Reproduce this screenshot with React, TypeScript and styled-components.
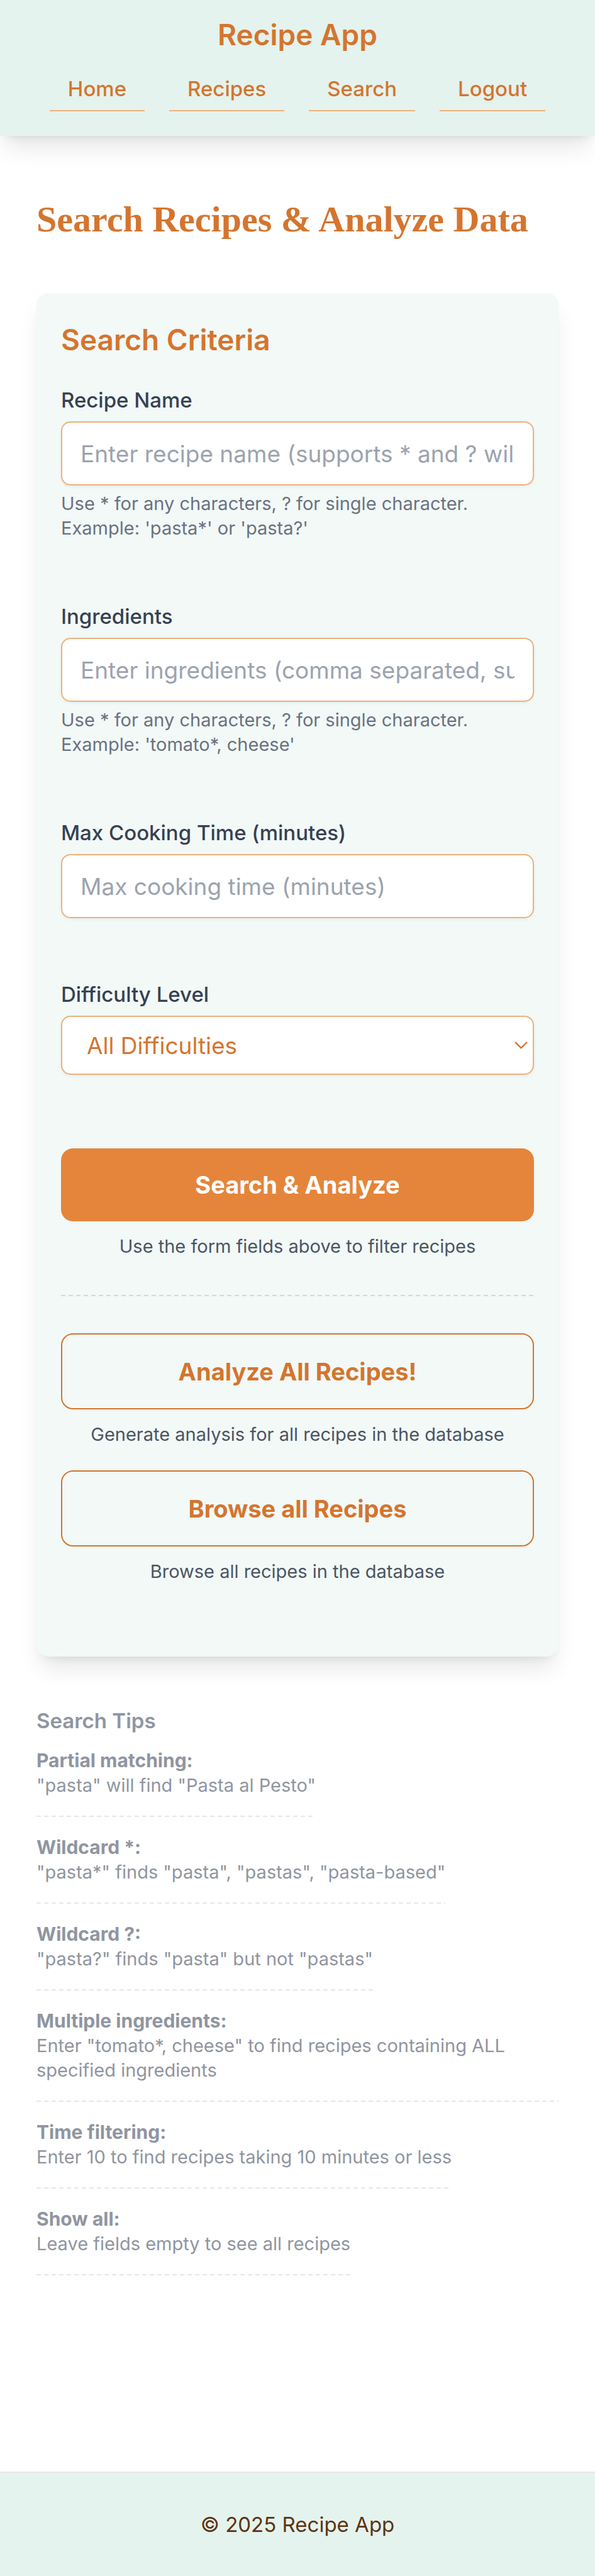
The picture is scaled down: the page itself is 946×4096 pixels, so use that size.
import React from 'react';
import styled, { createGlobalStyle, css } from 'styled-components';

const color = {
  accent: '#d4752f',
  accentFill: '#e4853b',
  accentLine: '#edb17c',
  mint: '#e4f3ed',
  mintSoft: '#f2f9f7',
  mintLine: '#c0e2d6',
  label: '#374151',
  caption: '#4b5563',
  helper: '#6b7280',
  placeholder: '#9ca3af',
  muted: '#9095a0',
  line: '#e5e7eb',
  footer: '#5c3413',
};

const sans = `Inter, 'Liberation Sans', sans-serif`;
const lifted = '0 24px 36px -7px rgba(0, 0, 0, 0.1), 0 10px 15px -10px rgba(0, 0, 0, 0.1)';

const dashed = (tone: string) => css`
  background: repeating-linear-gradient(to right, ${tone} 0 7px, transparent 7px 12px) left bottom / 100% 2px no-repeat;
`;

const GlobalStyle = createGlobalStyle`
  *, *::before, *::after { box-sizing: border-box; }
  body {
    margin: 0;
    background: #fff;
    font-family: ${sans};
    -webkit-font-smoothing: antialiased;
  }
  h1, h2, h3, p, ul { margin: 0; padding: 0; }
  input, select, button { font-family: inherit; margin: 0; }
`;

const Page = styled.div`
  min-height: 100vh;
  display: flex;
  flex-direction: column;
`;

const Header = styled.header`
  display: flex;
  flex-direction: column;
  align-items: center;
  gap: 17px;
  padding: 20px 39px 39px;
  background: ${color.mint};
  box-shadow: ${lifted};
`;

const Brand = styled.a`
  font-size: 46px;
  font-weight: 600;
  line-height: 70px;
  color: ${color.accent};
  text-decoration: none;
`;

const Nav = styled.nav`
  display: flex;
  justify-content: center;
  gap: 39px;
`;

const NavLink = styled.a`
  padding: 10px 29px;
  border-bottom: 2px solid ${color.accentLine};
  font-size: 33px;
  font-weight: 500;
  line-height: 48px;
  color: ${color.accent};
  text-decoration: none;
`;

const Main = styled.main`
  flex: 1;
  padding: 94px 58px 117px;
`;

const PageTitle = styled.h1`
  margin-bottom: 78px;
  font-family: 'Liberation Serif', 'Times New Roman', serif;
  font-size: 58px;
  font-weight: 700;
  line-height: 78px;
  color: ${color.accent};
`;

const Card = styled.section`
  padding: 39px 39px 116px;
  border-radius: 19px;
  background: ${color.mintSoft};
  box-shadow: ${lifted};
`;

const CardTitle = styled.h2`
  margin-bottom: 37px;
  font-size: 46px;
  font-weight: 600;
  line-height: 70px;
  color: ${color.accent};
`;

const Fields = styled.div`
  display: flex;
  flex-direction: column;
  gap: 97px;
  margin-bottom: 117px;
`;

const Field = styled.div`
  display: flex;
  flex-direction: column;
`;

const Label = styled.label`
  margin-bottom: 10px;
  font-size: 33px;
  font-weight: 500;
  line-height: 48px;
  color: ${color.label};
`;

const control = css`
  width: 100%;
  border: 2px solid ${color.accentLine};
  border-radius: 15px;
  background: #fff;
  box-shadow: 0 2px 5px rgba(0, 0, 0, 0.05);
  font-size: 37px;
  appearance: none;
  outline: none;
`;

const TextInput = styled.input`
  ${control}
  height: 102px;
  padding: 0 29px;
  color: ${color.label};

  &::placeholder {
    color: ${color.placeholder};
    opacity: 1;
  }
  &::-webkit-inner-spin-button,
  &::-webkit-outer-spin-button {
    appearance: none;
    margin: 0;
  }
`;

const SelectBox = styled.div`
  position: relative;
`;

const Select = styled.select`
  ${control}
  display: block;
  height: 94px;
  padding: 0 39px;
  color: ${color.accent};
`;

const Chevron = styled.svg`
  position: absolute;
  top: 50%;
  right: 10px;
  width: 21px;
  height: 12px;
  margin-top: -6px;
  pointer-events: none;
`;

const Helper = styled.p`
  margin-top: 9px;
  font-size: 29px;
  line-height: 39px;
  color: ${color.helper};
`;

const Action = styled.div`
  display: flex;
  flex-direction: column;
  gap: 20px;
`;

const Actions = styled.div`
  display: flex;
  flex-direction: column;
  gap: 38px;
`;

const Button = styled.button<{ $outline?: boolean }>`
  height: ${(p) => (p.$outline ? 121 : 116)}px;
  border: ${(p) => (p.$outline ? `2px solid ${color.accent}` : '0')};
  border-radius: 19px;
  background: ${(p) => (p.$outline ? 'transparent' : color.accentFill)};
  color: ${(p) => (p.$outline ? color.accent : '#fff')};
  font-size: 38px;
  font-weight: 700;
  cursor: pointer;
`;

const Caption = styled.p`
  font-size: 29px;
  line-height: 39px;
  text-align: center;
  color: ${color.caption};
`;

const Divider = styled.hr`
  ${dashed(color.mintLine)}
  height: 2px;
  margin: 58px 0 59px;
  border: 0;
`;

const Tips = styled.section`
  margin-top: 78px;
  color: ${color.muted};
`;

const TipsTitle = styled.h3`
  margin-bottom: 20px;
  font-size: 33px;
  font-weight: 600;
  line-height: 48px;
`;

const TipList = styled.ul`
  display: flex;
  flex-direction: column;
  align-items: flex-start;
  gap: 29px;
  list-style: none;
`;

const Tip = styled.li`
  ${dashed(color.line)}
  max-width: 100%;
  padding-bottom: 31px;
  font-size: 29px;
  line-height: 39px;
`;

const TipName = styled.strong`
  display: block;
  font-size: 30px;
  font-weight: 700;
`;

const Footer = styled.footer`
  padding: 58px;
  border-top: 2px solid ${color.line};
  background: ${color.mint};
  font-size: 33px;
  line-height: 48px;
  text-align: center;
  color: ${color.footer};
`;

const links = ['Home', 'Recipes', 'Search', 'Logout'];

const tips = [
  { name: 'Partial matching:', text: '"pasta" will find "Pasta al Pesto"' },
  { name: 'Wildcard *:', text: '"pasta*" finds "pasta", "pastas", "pasta-based"' },
  { name: 'Wildcard ?:', text: '"pasta?" finds "pasta" but not "pastas"' },
  { name: 'Multiple ingredients:', text: 'Enter "tomato*, cheese" to find recipes containing ALL specified ingredients' },
  { name: 'Time filtering:', text: 'Enter 10 to find recipes taking 10 minutes or less' },
  { name: 'Show all:', text: 'Leave fields empty to see all recipes' },
];

export default function App() {
  return (
    <Page>
      <GlobalStyle />
      <Header>
        <Brand href="#">Recipe App</Brand>
        <Nav>
          {links.map((name) => (
            <NavLink key={name} href={`#${name.toLowerCase()}`}>
              {name}
            </NavLink>
          ))}
        </Nav>
      </Header>

      <Main>
        <PageTitle>Search Recipes &amp; Analyze Data</PageTitle>

        <Card>
          <CardTitle>Search Criteria</CardTitle>
          <form onSubmit={(e) => e.preventDefault()}>
            <Fields>
              <Field>
                <Label htmlFor="name">Recipe Name</Label>
                <TextInput id="name" type="text" placeholder="Enter recipe name (supports * and ? wildcards)" />
                <Helper>Use * for any characters, ? for single character. Example: 'pasta*' or 'pasta?'</Helper>
              </Field>
              <Field>
                <Label htmlFor="ingredients">Ingredients</Label>
                <TextInput
                  id="ingredients"
                  type="text"
                  placeholder="Enter ingredients (comma separated, supports * and ? wildcards)"
                />
                <Helper>Use * for any characters, ? for single character. Example: 'tomato*, cheese'</Helper>
              </Field>
              <Field>
                <Label htmlFor="time">Max Cooking Time (minutes)</Label>
                <TextInput id="time" type="number" placeholder="Max cooking time (minutes)" />
              </Field>
              <Field>
                <Label htmlFor="difficulty">Difficulty Level</Label>
                <SelectBox>
                  <Select id="difficulty" defaultValue="">
                    <option value="">All Difficulties</option>
                    <option value="easy">Easy</option>
                    <option value="medium">Medium</option>
                    <option value="hard">Hard</option>
                  </Select>
                  <Chevron viewBox="0 0 21 12" fill="none" aria-hidden="true">
                    <path d="M1 1L10.5 10.3L20 1" stroke={color.accent} strokeWidth="2.4" />
                  </Chevron>
                </SelectBox>
              </Field>
            </Fields>

            <Action>
              <Button type="submit">Search &amp; Analyze</Button>
              <Caption>Use the form fields above to filter recipes</Caption>
            </Action>
            <Divider />
            <Actions>
              <Action>
                <Button type="button" $outline>
                  Analyze All Recipes!
                </Button>
                <Caption>Generate analysis for all recipes in the database</Caption>
              </Action>
              <Action>
                <Button type="button" $outline>
                  Browse all Recipes
                </Button>
                <Caption>Browse all recipes in the database</Caption>
              </Action>
            </Actions>
          </form>
        </Card>

        <Tips>
          <TipsTitle>Search Tips</TipsTitle>
          <TipList>
            {tips.map((tip) => (
              <Tip key={tip.name}>
                <TipName>{tip.name}</TipName>
                {tip.text}
              </Tip>
            ))}
          </TipList>
        </Tips>
      </Main>

      <Footer>© 2025 Recipe App</Footer>
    </Page>
  );
}
